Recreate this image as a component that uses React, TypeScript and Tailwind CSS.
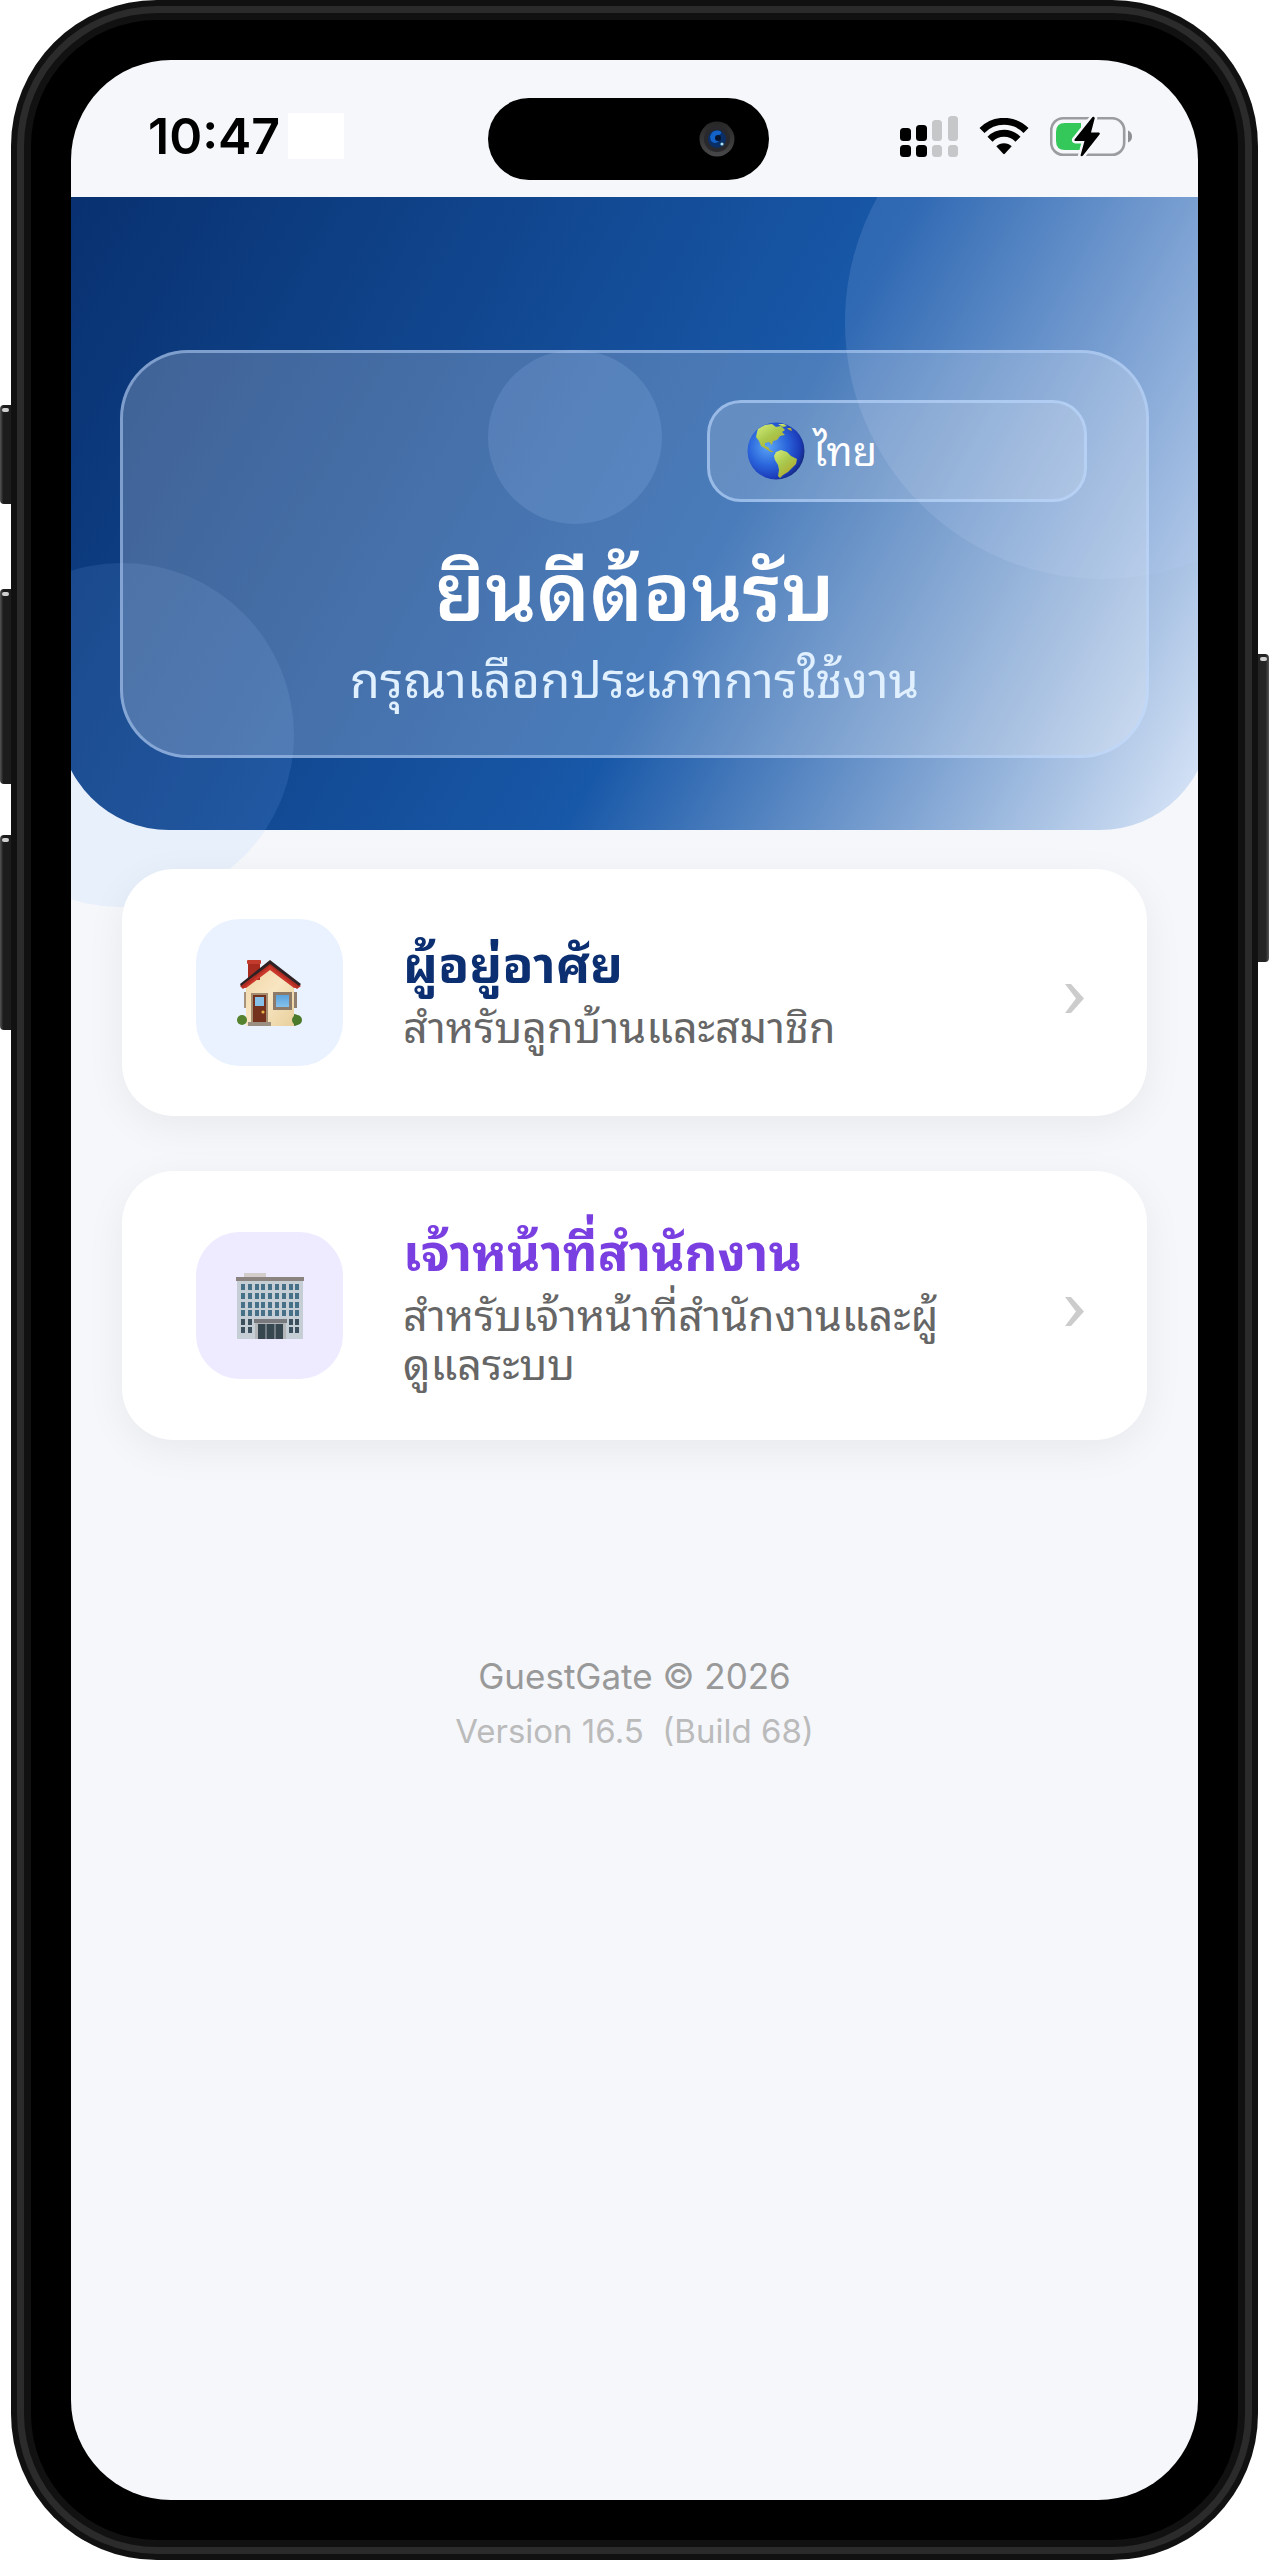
import clsx from "clsx";

type MenuCardProps = {
  title: string;
  description: string;
  titleClass: string;
  tileClass: string;
  icon: React.ReactNode;
};

function SignalIcon() {
  return (
    <svg width="58" height="41" viewBox="0 0 58 41" aria-hidden="true">
      <g fill="#000">
        <rect x="0" y="12" width="11" height="13" rx="3.5" />
        <rect x="0" y="29" width="11" height="12" rx="3.5" />
        <rect x="16" y="9" width="11" height="16" rx="3.5" />
        <rect x="16" y="29" width="11" height="12" rx="3.5" />
      </g>
      <g fill="#c6c7c9">
        <rect x="32" y="4" width="10" height="21" rx="3.5" />
        <rect x="32" y="29" width="10" height="12" rx="3.5" />
        <rect x="48" y="0" width="10" height="25" rx="3.5" />
        <rect x="48" y="29" width="10" height="12" rx="3.5" />
      </g>
    </svg>
  );
}

function WifiIcon() {
  return (
    <svg width="50" height="37" viewBox="0 0 50 37" aria-hidden="true">
      <path d="M3 12.5 A31 31 0 0 1 47 12.5" fill="none" stroke="#000" strokeWidth="7" />
      <path d="M11 21.2 A19.5 19.5 0 0 1 39 21.2" fill="none" stroke="#000" strokeWidth="7" />
      <path d="M17.3 28.3 A11 11 0 0 1 32.7 28.3 L25.8 35.8 Q25 36.6 24.2 35.8 Z" fill="#000" />
    </svg>
  );
}

function BatteryIcon() {
  return (
    <svg width="82" height="41" viewBox="0 0 82 41" aria-hidden="true">
      <rect x="1.2" y="2.2" width="73" height="36.6" rx="12" fill="none" stroke="#9b9ca0" strokeWidth="2.6" />
      <path d="M78 14.5 Q82 16 82 20.5 Q82 25 78 26.5 Z" fill="#8e8f93" />
      <path d="M15 7 H31 V34 H15 Q6 34 6 25 V16 Q6 7 15 7 Z" fill="#34c759" />
      <path
        d="M42.5 1 L24.5 23.5 Q24 25 25.5 25 H34.5 L30.5 39.5 Q31.5 41 33 39.5 L49.5 18.5 Q50.5 17 49 16.6 H41 L44.8 2 Q43.8 0 42.5 1 Z"
        fill="#000"
        stroke="#f6f8fb"
        strokeWidth="5"
        paintOrder="stroke"
      />
    </svg>
  );
}

function GlobeIcon() {
  return (
    <svg width="58" height="58" viewBox="0 0 58 58" aria-hidden="true">
      <defs>
        <radialGradient id="ocean" cx="0.36" cy="0.42" r="0.66">
          <stop offset="0" stopColor="#5aa5f5" />
          <stop offset="0.5" stopColor="#2b66dc" />
          <stop offset="0.85" stopColor="#1c3cba" />
          <stop offset="1" stopColor="#152a80" />
        </radialGradient>
        <linearGradient id="land" x1="0" y1="0" x2="0.7" y2="1">
          <stop offset="0" stopColor="#d6ee7c" />
          <stop offset="0.5" stopColor="#a9c84d" />
          <stop offset="1" stopColor="#b3a52c" />
        </linearGradient>
      </defs>
      <circle cx="29" cy="29" r="28.5" fill="url(#ocean)" />
      <g fill="url(#land)">
        <path d="M11 7 L18 3 L25 2 L29 5 L34 4 L38 8 L35 10 L38 13 L33 14 L30 18 L26 19 L25 23 L22 20 L18 21 L18 24 L21 25 L23 28 L27 30 L24 30 L19 27 L14 24 L12 19 L9 15 L10 10 Z" />
        <path d="M31 2 L37 2 L40 4 L36 5 Z M40 6 L44 6 L45 9 L42 8 Z" />
        <path d="M29 30 L34 28 L40 30 L44 34 L50 37 L49 42 L45 46 L41 50 L36 53 L33 56 L31 54 L32 48 L31 43 L28 38 L27 34 Z" />
      </g>
    </svg>
  );
}

function HouseIcon() {
  return (
    <svg width="66" height="66" viewBox="0 0 66 66" aria-hidden="true">
      <defs>
        <linearGradient id="wall" x1="0" y1="0" x2="1" y2="1">
          <stop offset="0" stopColor="#f0d3a4" />
          <stop offset="0.5" stopColor="#f8e6c2" />
          <stop offset="1" stopColor="#e8cf9c" />
        </linearGradient>
        <linearGradient id="pane" x1="0" y1="0" x2="0" y2="1">
          <stop offset="0" stopColor="#5aa3dd" />
          <stop offset="1" stopColor="#86c1ea" />
        </linearGradient>
      </defs>
      <rect x="7" y="32" width="3" height="16" fill="#a5937f" />
      <rect x="57" y="32" width="3" height="16" fill="#8f7f70" />
      <path d="M9 24 L33 5 L57 24 V66 H9 Z" fill="url(#wall)" />
      <rect x="11" y="1" width="12" height="19" fill="#a92a1f" />
      <rect x="10" y="0" width="14" height="4" rx="1" fill="#c23b2c" />
      <path d="M33 3 L3 26 L6 29 L33 8 L60 29 L64 26 Z" fill="#b32c22" />
      <path d="M33 6 L6 28 L9 28 L33 10 L57 28 L60 28 Z" fill="#c9382b" />
      <path d="M33 0 L3 24 L4 26 L33 4 L62 26 L64 24 Z" fill="#2e2224" />
      <rect x="14" y="33" width="17" height="30" fill="#a58d72" />
      <rect x="16" y="35" width="13" height="28" fill="#74311d" />
      <rect x="18" y="37" width="9" height="9" fill="#86bfe8" />
      <circle cx="26" cy="52" r="1.6" fill="#e8b545" />
      <rect x="36" y="32" width="19" height="18" fill="#8d7a68" />
      <rect x="39" y="35" width="13" height="12" fill="url(#pane)" />
      <circle cx="5" cy="60" r="5" fill="#55822f" />
      <path d="M57 54 A6 6 0 0 1 57 66 Z" fill="#44702a" />
      <circle cx="60" cy="60" r="5" fill="#4c7a2b" />
      <rect x="11" y="62" width="23" height="4" fill="#9b8f84" />
    </svg>
  );
}

function OfficeIcon() {
  const columns = [5, 12, 19, 25, 32, 39, 46, 53, 59];
  const rows = [11, 20, 29, 37, 46, 54];

  return (
    <svg width="68" height="66" viewBox="0 0 68 66" aria-hidden="true">
      <rect x="8" y="0" width="22" height="5" fill="#d2cdcb" />
      <rect x="1" y="6" width="66" height="60" fill="#c5ced4" />
      <rect x="0" y="4" width="68" height="4" fill="#8a8380" />
      {rows.map((y) =>
        columns.map((x) => (
          <rect
            key={`${x}-${y}`}
            x={x}
            y={y}
            width="4"
            height="6"
            fill={y > 40 ? "#3c4f5d" : "#466f88"}
          />
        ))
      )}
      <rect x="19" y="46" width="31" height="20" fill="#b3b6b9" />
      <rect x="18" y="46" width="33" height="4" fill="#77797c" />
      <rect x="22" y="51" width="25" height="15" fill="#37474f" />
      <path d="M30 51 V66 M39 51 V66" stroke="#8c959b" strokeWidth="1.4" />
    </svg>
  );
}

function SideButton({ className }: { className: string }) {
  return (
    <span className={clsx("absolute w-[11px] overflow-hidden", className)}>
      <span className="mx-[2px] mt-[3px] block h-[4px] rounded-full bg-[#d0d0d0]" />
    </span>
  );
}

function StatusBar() {
  return (
    <div className="relative flex h-[137px] items-center justify-between pt-[30px] pr-[66px] pb-[15px] pl-[77px]">
      <div className="flex items-center gap-[8px]">
        <span className="font-['Inter'] text-[50px] leading-[48px] font-semibold text-black">10:47</span>
        <span className="h-[46px] w-[56px] bg-white" />
      </div>
      <div className="absolute top-[38px] left-[37%] flex h-[82px] w-[281px] items-center justify-end rounded-full bg-black pr-[34px]">
        <svg width="36" height="42" viewBox="0 0 36 42" aria-hidden="true">
          <defs>
            <linearGradient id="lens" x1="0" y1="0" x2="0" y2="1">
              <stop offset="0" stopColor="#262626" />
              <stop offset="1" stopColor="#48484a" />
            </linearGradient>
          </defs>
          <circle cx="18" cy="21" r="17.5" fill="url(#lens)" />
          <circle cx="18" cy="21" r="13" fill="#29292d" />
          <circle cx="18" cy="21" r="9" fill="#0a2f66" />
          <path d="M11 19 Q13 11 21 13 Q24 15 20 17 Q17 19 20 23 Q16 27 12 23 Z" fill="#1262c8" />
          <circle cx="19" cy="20" r="3" fill="#04142f" />
          <circle cx="23" cy="26" r="1.6" fill="#a9e0ee" />
        </svg>
      </div>
      <div className="flex items-center gap-[21px]">
        <SignalIcon />
        <WifiIcon />
        <BatteryIcon />
      </div>
    </div>
  );
}

function Hero() {
  return (
    <section className="relative -mx-3 rounded-b-[110px] bg-[linear-gradient(119deg,#08306f_0%,#1858a8_57%,#dfeafa_100%)] px-[61px] pt-[153px] pb-[72px]">
      <div className="absolute inset-0 overflow-hidden rounded-b-[110px]">
        <div className="absolute -top-[132px] -right-[149px] size-[514px] rounded-full bg-[#b9d2f5]/15" />
        <div className="absolute top-[153px] left-[429px] size-[174px] rounded-full bg-[#9cc4ff]/15" />
      </div>
      <div className="absolute -bottom-[77px] -left-[109px] size-[344px] rounded-full bg-[#8cbaff]/12" />

      <div className="relative flex flex-col rounded-[68px] border-[3px] border-[#bcd8ff]/50 bg-white/22 px-[59px] pt-[47px] pb-[43px] text-center">
        <button
          type="button"
          className="flex h-[102px] w-[380px] items-center gap-[8px] self-end rounded-[34px] border-[3px] border-[#bcd8ff]/60 bg-white/15 pl-[37px] text-[40px] leading-[48px] text-white"
        >
          <GlobeIcon />
          <span className="pb-[6px]">ไทย</span>
        </button>
        <h1 className="mt-[28px] text-[80px] leading-[110px] font-semibold text-white">ยินดีต้อนรับ</h1>
        <p className="text-[49px] leading-[72px] text-[#e0f0ff]">กรุณาเลือกประเภทการใช้งาน</p>
      </div>
    </section>
  );
}

function MenuCard({ title, description, titleClass, tileClass, icon }: MenuCardProps) {
  return (
    <a
      href="#"
      className="flex items-center rounded-[52px] bg-white py-[50px] pr-[63px] pl-[74px] shadow-[0_10px_40px_rgba(0,0,0,0.06)]"
    >
      <span className={clsx("flex size-[147px] shrink-0 items-center justify-center rounded-[44px]", tileClass)}>
        {icon}
      </span>
      <span className="ml-[60px] flex-1 pb-[5px]">
        <span className={clsx("block text-[51px] leading-[55px] font-bold", titleClass)}>{title}</span>
        <span className="mt-[11px] block text-[43px] leading-[49px] whitespace-pre-line text-[#666]">
          {description}
        </span>
      </span>
      <svg width="19" height="42" viewBox="0 0 19 42" className="shrink-0" aria-hidden="true">
        <path d="M0 12 H6 L19 26.5 L6 41 H0 L11 26.5 Z" fill="#ccc" />
      </svg>
    </a>
  );
}

export default function App() {
  return (
    <div className="relative min-h-screen bg-white px-[11px] font-['Noto_Sans_Thai_Looped','Noto_Sans_Thai','Noto_Sans',sans-serif]">
      <SideButton className="top-[405px] left-0 h-[99px] rounded-l-sm bg-linear-to-r from-[#555] to-[#1c1c1c] to-30%" />
      <SideButton className="top-[589px] left-0 h-[195px] rounded-l-sm bg-linear-to-r from-[#555] to-[#1c1c1c] to-30%" />
      <SideButton className="top-[835px] left-0 h-[195px] rounded-l-sm bg-linear-to-r from-[#555] to-[#1c1c1c] to-30%" />
      <SideButton className="top-[654px] right-0 h-[308px] rounded-r-sm bg-linear-to-l from-[#555] to-[#242424] to-30%" />

      <div className="flex min-h-screen flex-col rounded-[146px] bg-[#111] p-[6px]">
        <div className="flex flex-1 flex-col rounded-[140px] bg-[#2b2b2b] p-[7px]">
          <div className="flex flex-1 flex-col rounded-[133px] bg-[#111] p-[7px]">
            <div className="flex flex-1 flex-col rounded-[126px] bg-black p-[40px]">
              <main className="flex flex-1 flex-col overflow-hidden rounded-[100px] bg-[#f5f7fb]">
                <StatusBar />
                <Hero />
                <div className="relative flex flex-col gap-[55px] px-[51px] pt-[39px]">
                  <MenuCard
                    title="ผู้อยู่อาศัย"
                    description="สำหรับลูกบ้านและสมาชิก"
                    titleClass="text-[#0b2f70]"
                    tileClass="bg-[#eaf2ff]"
                    icon={<HouseIcon />}
                  />
                  <MenuCard
                    title="เจ้าหน้าที่สำนักงาน"
                    description={"สำหรับเจ้าหน้าที่สำนักงานและผู้\nดูแลระบบ"}
                    titleClass="text-[#7a3fe0]"
                    tileClass="bg-[#eeeaff]"
                    icon={<OfficeIcon />}
                  />
                </div>
                <footer className="mt-[208px] text-center font-['Inter']">
                  <p className="text-[35px] leading-[56px] text-[#999]">GuestGate © 2026</p>
                  <p className="text-[33px] leading-[54px] whitespace-pre text-[#bbb]">Version 16.5  (Build 68)</p>
                </footer>
              </main>
            </div>
          </div>
        </div>
      </div>
    </div>
  );
}
